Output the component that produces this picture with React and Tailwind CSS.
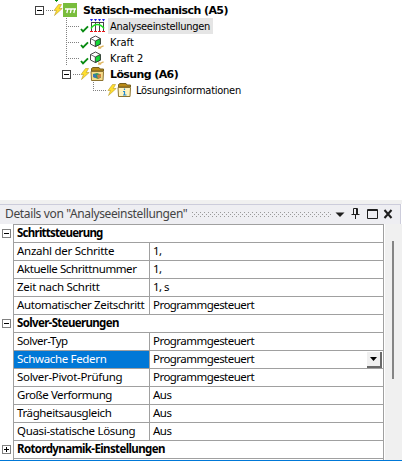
const Bolt = () => (
  <svg className="h-4 w-[10px] shrink-0" viewBox="0 0 10 16">
    <path d="M5.5 2.5h3L6.200 6.500h3L1.500 13.500l2-5H1z" fill="#ffdf2e" stroke="#b99a2c" strokeWidth=".6" />
  </svg>
);

const Check = () => (
  <svg className="h-4 w-[10px] shrink-0" viewBox="0 0 10 16">
    <path d="M1 11 3 13.300 8 8.300" fill="none" stroke="#078a10" strokeWidth="1.900" />
  </svg>
);

const SystemIcon = () => (
  <svg className="h-4 w-[15px] shrink-0" viewBox="0 0 15 16">
    <path d="M0 1h14v14H0z" fill="#79bd3c" />
    <path d="M2 7h11M4.800 7 3.800 11M8.300 7l-1 4M11.800 7l-1 4" fill="none" stroke="#fff" strokeWidth="1.300" />
  </svg>
);

const SettingsIcon = () => (
  <svg className="h-4 w-[15px] shrink-0" viewBox="0 0 15 16">
    <path d="M1.500 4.500h12M1.500 4v9M5.500 4v9M9.500 4v9M13.500 4v9" fill="none" stroke="#444" />
    <path d="M0 1h3L1.500 3.500zM4 1h3L5.500 3.500zM8 1h3L9.500 3.500zM12 1h3L13.500 3.500z" fill="#1818e8" />
    <path d="M1 10.500C4 5.500 10 5 14 10.500" fill="none" stroke="#1be01b" strokeWidth="1.500" />
    <path d="M0 13.500h3M4 13.500h3M8 13.500h3M12 13.500h3" stroke="#f01414" />
  </svg>
);

const ForceIcon = () => (
  <svg className="h-4 w-[15px] shrink-0" viewBox="0 0 15 16">
    <path d="M.5 4.500 5.500 2l4.800 2.500v5.700L5.300 12.500.5 10z" fill="#fff" stroke="#4a4a4a" />
    <path d="m5.300 7 5-2.500v5.700l-5 2.300z" fill="#12d936" stroke="#333" strokeWidth=".9" />
    <path d="m.5 4.500 4.800 2.500" stroke="#4a4a4a" strokeWidth=".8" />
    <path d="m8 14.800.6-3 1.300.9 3.300-1.500.8 1-3.300 1.700.8.900z" fill="#e0b45c" />
  </svg>
);

const Folder = ({ info }) => (
  <svg className="h-4 w-[15px] shrink-0" viewBox="0 0 15 16">
    <path d="M1.500 5V2.500L3 1.500h6l1 1.500h3.500V5z" fill="#b98a16" stroke="#76601f" />
    <path d="M1 5.500h12.500l-.5 9H1.500z" fill={info ? '#fff3bd' : '#f7dc8a'} stroke="#8d7430" />
    {info ? (
      <path d="M7.500 6.500V8M6 9.500h1.500V13M6 13h3.500" fill="none" stroke="#278ad0" strokeWidth="1.200" />
    ) : (
      <>
        <path d="m3 8 4-1 4 1.500v3L8 13l-5-2z" fill="#359566" />
        <path d="m7 9 4-1v3l-3 2z" fill="#d08040" />
        <path d="m3 8 3 1v3l-3-1z" fill="#3974bd" />
      </>
    )}
  </svg>
);

const Box = ({ plus, grey }) => (
  <svg className="h-[9px] w-[9px] shrink-0" viewBox="0 0 9 9" shapeRendering="crispEdges">
    <path d="M.5.5h8v8h-8z" fill="#fff" stroke={grey ? '#808080' : '#404040'} />
    <path d={plus ? 'M2 4.500h5M4.500 2v5' : 'M2 4.500h5'} stroke="#000" />
  </svg>
);

const Dots = ({ className, d }) => (
  <svg className={'h-4 shrink-0 ' + className} shapeRendering="crispEdges">
    <path d={d} fill="none" stroke="#808080" strokeDasharray="1 1" />
  </svg>
);

const rows = [
  ['Schrittsteuerung', null, 'tracking-[-0.75px]', '-'],
  ['Anzahl der Schritte', '1,', 'tracking-[-0.26px]'],
  ['Aktuelle Schrittnummer', '1,', 'tracking-[-0.41px]'],
  ['Zeit nach Schritt', '1, s', 'tracking-[-0.28px]'],
  ['Automatischer Zeitschritt', 'Programmgesteuert', 'tracking-[-0.37px]'],
  ['Solver-Steuerungen', null, 'tracking-[-0.65px]', '-'],
  ['Solver-Typ', 'Programmgesteuert', 'tracking-[-0.5px]'],
  ['Schwache Federn', 'Programmgesteuert', 'tracking-[-0.33px]', 'sel'],
  ['Solver-Pivot-Prüfung', 'Programmgesteuert', 'tracking-[-0.32px]'],
  ['Große Verformung', 'Aus', 'tracking-[-0.45px]'],
  ['Trägheitsausgleich', 'Aus', 'tracking-[-0.38px]'],
  ['Quasi-statische Lösung', 'Aus', 'tracking-[-0.32px]'],
  ['Rotordynamik-Einstellungen', null, 'tracking-[-0.62px]', '+'],
];

function Row({ row: [label, value, tracking, kind] }) {
  return (
    <div className="flex h-[18px]">
      <div className="flex w-[13px] items-center pl-[2px] pt-px">
        {(kind === '-' || kind === '+') && <Box grey plus={kind === '+'} />}
      </div>
      <div className="flex w-[371px] border-x border-t border-[#a0a0a0]">
        {value === null ? (
          <div className={'pl-[3px] font-bold leading-4 ' + tracking}>{label}</div>
        ) : (
          <>
            <div className={'w-[136px] border-r border-[#a0a0a0] pl-[3px] leading-4 ' + tracking + (kind === 'sel' ? ' bg-[#0078d7] text-white' : '')}>{label}</div>
            <div className="flex-1 pl-[3px] leading-4 tracking-[-0.54px]">{value}</div>
            {kind === 'sel' && (
              <div className="mr-px mt-px flex h-4 w-[15px] items-center justify-center border-b-2 border-r-2 border-[#696969] bg-[#f0f0f0]">
                <svg className="h-1 w-[7px]" viewBox="0 0 7 4"><path d="M0 0h7L3.500 4z" /></svg>
              </div>
            )}
          </>
        )}
      </div>
    </div>
  );
}

export default function App() {
  return (
    <div className="flex h-[461px] w-[402px] flex-col overflow-hidden bg-white text-black">
      <div className="h-[200px] whitespace-nowrap font-['DejaVu_Sans_Condensed','DejaVu_Sans',sans-serif] text-[11px] leading-[18px]">
        <svg className="h-[2px] w-[402px]"><path d="m55 0 1.500 1.500L58 0" fill="#078a10" stroke="#078a10" /></svg>
        <div className="flex h-4 items-center pl-[35px]">
          <Box /><Dots className="w-[9px]" d="M2 8.500h8" /><Bolt /><SystemIcon />
          <span className="pl-[5px] pt-0.5 font-['DejaVu_Sans','Verdana',sans-serif] font-bold tracking-[-0.56px]">Statisch-mechanisch (A5)</span>
        </div>
        <div className="flex h-4 pl-[66px]">
          <Dots className="w-[14px]" d="M.5 0v16M2 8.500h12" /><Check /><SettingsIcon />
          <span className="ml-[3px] w-[105px] bg-[#e5e5e5] pl-[2px] tracking-[-0.3px]">Analyseeinstellungen</span>
        </div>
        <div className="flex h-4 pl-[66px]">
          <Dots className="w-[14px]" d="M.5 0v16M2 8.500h12" /><Check /><ForceIcon /><span className="pl-[5px]">Kraft</span>
        </div>
        <div className="flex h-4 pl-[66px]">
          <Dots className="w-[14px]" d="M.5 0v16M2 8.500h12" /><Check /><ForceIcon /><span className="pl-[5px]">Kraft 2</span>
        </div>
        <div className="flex h-4 items-center pl-[62px]">
          <Box /><Dots className="w-[9px]" d="M2 8.500h8" /><Bolt /><Folder />
          <span className="pl-[5px] pt-0.5 font-['DejaVu_Sans','Verdana',sans-serif] font-bold tracking-[-0.6px]">Lösung (A6)</span>
        </div>
        <div className="flex h-4 pl-[93px]">
          <Dots className="w-[14px]" d="M.5 0v8.500h14" /><Bolt /><Folder info /><span className="pl-[4px] tracking-[-0.25px]">Lösungsinformationen</span>
        </div>
      </div>
      <div className="h-1 bg-[#f0f0f0]" />
      <div className="flex h-5 w-[401px] items-center border-r border-t border-[#ccccdb] bg-[#eeeef2] font-['Noto_Sans',sans-serif] text-xs text-[#444]">
        <span className="w-[187px] whitespace-nowrap pb-px pl-[5px] tracking-[-0.36px]">Details von "Analyseeinstellungen"</span>
        <svg className="ml-[5px] h-[5px] w-[140px]" shapeRendering="crispEdges">
          <path d="M0 .5h140M0 4.500h140" stroke="#999" strokeDasharray="1 3" />
          <path d="M2 2.500h138" stroke="#999" strokeDasharray="1 3" />
        </svg>
        <svg className="h-[17px] w-[68px]" viewBox="332 0 68 17">
          <path d="M335.500 6.500h9l-4.500 4.500z" fill="#1e1e1e" />
          <path d="M353.500 2.500h4v6h-4zM356.500 2v6M351.500 8.500h8M355.500 9v4" fill="none" stroke="#1e1e1e" />
          <path d="M367.500 3.500h10v9h-10zM367 4.500h11" fill="none" stroke="#1e1e1e" />
          <path d="m384.500 4 7 8m0-8-7 8" stroke="#1e1e1e" strokeWidth="2" />
        </svg>
      </div>
      <div className="flex h-[236px]">
        <div className="w-[384px] overflow-hidden whitespace-nowrap font-['Noto_Sans',sans-serif] text-[11.500px]">
          {rows.map((row) => <Row key={row[0]} row={row} />)}
          <div className="ml-[13px] h-1 border-x border-t border-[#a0a0a0]" />
        </div>
        <div className="ml-px flex-1 bg-[#f0f0f0] pl-[7px] pt-[17px]"><div className="h-[138px] w-[2px] bg-[#858585]" /></div>
      </div>
      <div className="h-px bg-[#0078d7]" />
    </div>
  );
}
